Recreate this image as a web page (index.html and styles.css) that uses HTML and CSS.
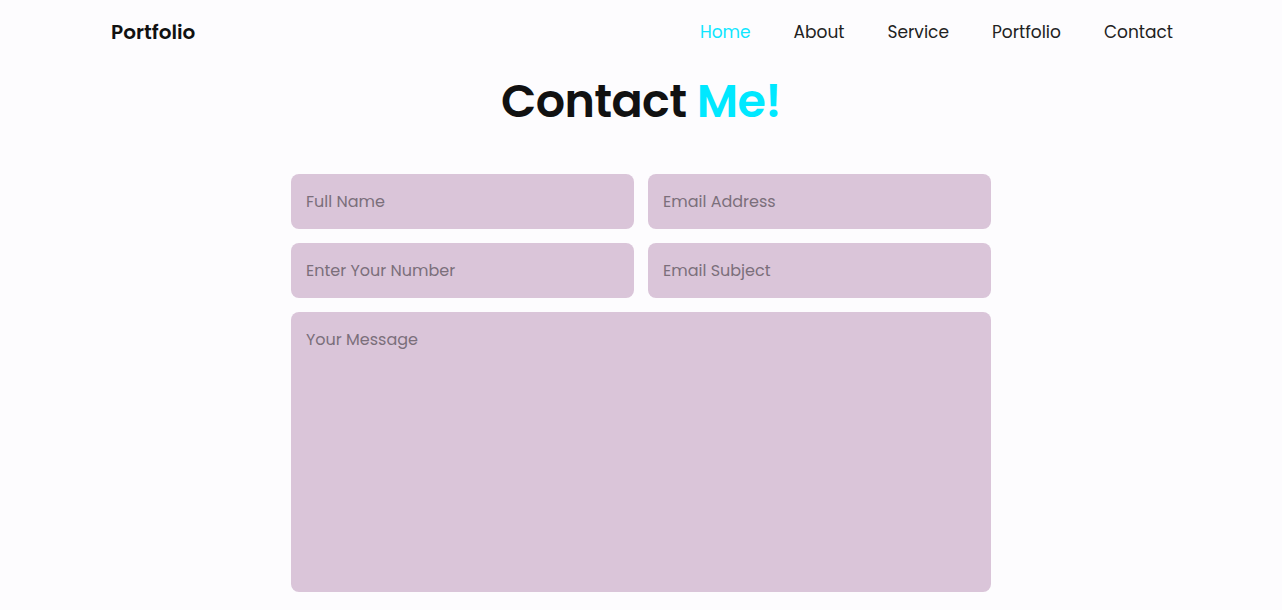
FILE: index.html
```html
<!DOCTYPE html>
<html lang="en">
<head>
<meta charset="utf-8">
<title>Contact</title>
<link rel="stylesheet" href="styles.css">
</head>
<body>
<header class="header">
  <a class="logo" href="#">Portfolio</a>
  <nav class="nav">
    <a class="nav-link active" href="#">Home</a>
    <a class="nav-link" href="#">About</a>
    <a class="nav-link" href="#">Service</a>
    <a class="nav-link" href="#">Portfolio</a>
    <a class="nav-link" href="#">Contact</a>
  </nav>
</header>
<section class="contact">
  <h2 class="heading">Contact <span class="accent">Me!</span></h2>
  <form class="form">
    <div class="row">
      <input class="field" type="text" placeholder="Full Name">
      <input class="field" type="email" placeholder="Email Address">
    </div>
    <div class="row">
      <input class="field" type="tel" placeholder="Enter Your Number">
      <input class="field" type="text" placeholder="Email Subject">
    </div>
    <textarea class="message" placeholder="Your Message"></textarea>
  </form>
</section>
</body>
</html>
```
FILE: styles.css
```css
* {
  box-sizing: border-box;
  margin: 0;
  padding: 0;
}
html, body {
  height: 100%;
}
body {
  background: #fdfcfe;
  font-family: "Poppins", "Open Sans", "Noto Sans", sans-serif;
  color: #111;
  overflow: hidden;
}
.header {
  display: flex;
  align-items: center;
  justify-content: space-between;
  height: 64px;
  padding: 0 109px 0 111px;
}
.logo {
  font-size: 20px;
  font-weight: 600;
  color: #111;
  text-decoration: none;
}
.nav {
  display: flex;
  gap: 43px;
}
.nav-link {
  font-size: 17px;
  color: #222;
  text-decoration: none;
}
.nav-link.active {
  color: #0ee6ff;
}
.contact {
  display: flex;
  flex-direction: column;
  align-items: center;
}
.heading {
  font-size: 46px;
  font-weight: 600;
  letter-spacing: -0.6px;
  line-height: 74px;
  color: #111;
  margin-bottom: 36px;
}
.accent {
  color: #00e8ff;
}
.form {
  width: 700px;
  display: flex;
  flex-direction: column;
  gap: 14px;
}
.row {
  display: flex;
  gap: 14px;
}
.field, .message {
  min-width: 0;
  border: none;
  outline: none;
  background: #dac5d9;
  border-radius: 8px;
  font-family: inherit;
  font-size: 16px;
  color: #333;
  padding: 0 15px;
}
.field {
  flex: 1;
  height: 55px;
}
.message {
  flex: none;
  width: 100%;
  height: 280px;
  padding: 15px 15px;
  resize: none;
}
.field::placeholder, .message::placeholder {
  color: #7b6f7b;
}
```
